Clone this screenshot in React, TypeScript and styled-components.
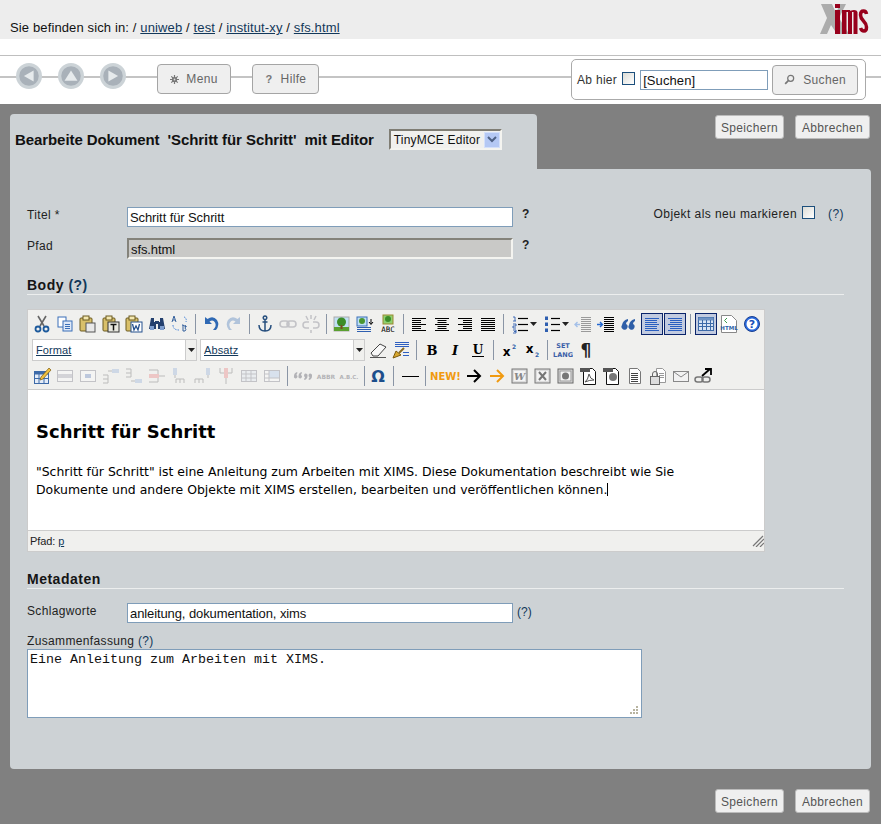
import React from "react"
import styled, { createGlobalStyle } from "styled-components"

const GlobalStyle = createGlobalStyle`
  html, body {
    margin: 0;
    padding: 0;
    background: #808080;
    font-family: "Liberation Sans", Arial, sans-serif;
    font-size: 12px;
    color: #111;
  }
  * { box-sizing: border-box; }
`

const LINK = "#12385a"

const HeaderBar = styled.header`
  height: 39px;
  background: #ededed;
  padding: 21px 12px 0 10px;
  display: flex;
  justify-content: space-between;
  align-items: flex-start;
`

const Crumbs = styled.div`
  font-size: 13px;
  line-height: 14px;
  letter-spacing: 0.13px;
`

const Crumb = styled.a`
  color: ${LINK};
  text-decoration: underline;
`

const LogoSvg = styled.svg`
  margin-top: -17px;
`

const NavWrap = styled.div`
  background: #fff;
  padding-top: 16px;
`

const NavBar = styled.nav`
  height: 49px;
  border-top: 1px solid #bfbfbf;
  background: linear-gradient(#c4c4c4, #c4c4c4) 0 20px / 100% 2px no-repeat;
  display: flex;
  align-items: flex-start;
  padding: 8px 15px 0 16px;
`

const RoundButtons = styled.div`
  display: flex;
  gap: 16px;
  margin-right: 31px;
  margin-top: -1px;
`

const RoundSvg = styled.svg`
  flex: none;
`

const NavButton = styled.button`
  height: 30px;
  width: ${(p) => p.$w}px;
  flex: none;
  margin-right: ${(p) => p.$mr || 0}px;
  border: 1px solid #a5a5a5;
  border-radius: 4px;
  background: #efefef;
  color: #666;
  font: 12px "Liberation Sans", Arial, sans-serif;
  letter-spacing: 0.35px;
  display: flex;
  align-items: center;
  justify-content: center;
  gap: ${(p) => p.$gap || 7}px;
  padding: 0;
`

const NavGlyph = styled.span`
  font-weight: bold;
  font-size: 11px;
  color: #777;
  width: 9px;
  text-align: center;
`

const SearchBox = styled.form`
  margin: -5px 0 0 auto;
  width: 295px;
  height: 41px;
  background: #fff;
  border: 1px solid #aaa;
  border-radius: 5px;
  display: flex;
  align-items: center;
  padding: 0 5px 0 5px;
  color: #333;
  letter-spacing: 0.3px;
  white-space: nowrap;
`

const Check = styled.input.attrs({ type: "checkbox" })`
  appearance: none;
  width: 13px;
  height: 13px;
  margin: ${(p) => p.$m || "0"};
  border: 1px solid #1c4f7c;
  background: linear-gradient(135deg, #dcdcd6, #fff);
  flex: none;
`

const SearchInput = styled.input`
  width: 128px;
  flex: none;
  height: 20px;
  margin: 0 4px 0 5px;
  padding: 1px 2px 0;
  border: 1px solid #7f9db9;
  font: 13px "Liberation Sans", Arial, sans-serif;
  letter-spacing: 0.1px;
  color: #111;
`

const ActionBar = styled.main`
  background: #808080;
  padding: 10px 10px 0 10px;
`

const TabRow = styled.div`
  display: flex;
  justify-content: space-between;
  align-items: flex-start;
`

const Tab = styled.div`
  width: 527px;
  height: 55px;
  background: #cdd2d5;
  border-radius: 4px 4px 0 0;
  padding: 15px 0 0 5px;
  display: flex;
  align-items: flex-start;
  font-size: 15px;
  font-weight: bold;
  white-space: pre;
  color: #111;
`

const TabTitle = styled.span`
  line-height: 21px;
  letter-spacing: -0.08px;
`

const FakeSelect = styled.div`
  margin-left: 15px;
  width: 113px;
  height: 21px;
  border: 2px solid;
  border-color: #7f7d74 #f4f4f0 #f4f4f0 #7f7d74;
  background: #f0f0ee;
  font-size: 12px;
  font-weight: normal;
  letter-spacing: 0.2px;
  display: flex;
  align-items: center;
  justify-content: space-between;
  padding-left: 3px;
`

const SelectArrow = styled.span`
  width: 16px;
  height: 16px;
  background: #b4c8f4;
  border: 1px solid #d4e0fa;
  display: flex;
  align-items: center;
  justify-content: center;
`

const ButtonPair = styled.div`
  display: flex;
  gap: 11px;
  padding: ${(p) => p.$pad};
  justify-content: flex-end;
`

const FormButton = styled.button`
  height: 24px;
  width: ${(p) => p.$w}px;
  background: #efefef;
  border: 1px solid #bbb;
  border-radius: 3px;
  color: #555;
  font: 12px "Liberation Sans", Arial, sans-serif;
  letter-spacing: 0.32px;
  padding: 1px 0 0;
`

const Panel = styled.section`
  width: 861px;
  height: 600px;
  background: #cdd2d5;
  border-radius: 0 4px 4px 4px;
  padding: 38px 27px 0 17px;
`

const FieldRow = styled.div`
  display: flex;
  align-items: flex-start;
  height: ${(p) => p.$h}px;
  margin-top: ${(p) => p.$mt || 0}px;
`

const FieldLabel = styled.label`
  width: 100px;
  line-height: 15px;
  padding-top: 1px;
  letter-spacing: 0.35px;
  color: #222;
`

const TextInput = styled.input`
  width: 386px;
  height: ${(p) => (p.$disabled ? 21 : 20)}px;
  padding: 1px 2px 0;
  border: ${(p) => (p.$disabled ? "2px solid" : "1px solid #7f9db9")};
  border-color: ${(p) => (p.$disabled ? "#84837b #f4f4f0 #f4f4f0 #84837b" : "#7f9db9")};
  background: ${(p) => (p.$disabled ? "#c9c9c7" : "#fff")};
  font: 13px "Liberation Sans", Arial, sans-serif;
  letter-spacing: -0.1px;
  color: #111;
`

const Hint = styled.span`
  font-weight: bold;
  margin-left: 9px;
  line-height: 15px;
  color: #222;
`

const HelpLink = styled.a`
  color: ${LINK};
  margin-left: ${(p) => p.$ml || 0}px;
  padding-top: ${(p) => p.$pt || 0}px;
  font-weight: ${(p) => (p.$bold ? "bold" : "normal")};
`

const NewFlag = styled.div`
  margin-left: auto;
  display: flex;
  align-items: flex-start;
  line-height: 15px;
  letter-spacing: 0.42px;
  color: #222;
`

const SectionTitle = styled.h2`
  margin: 0;
  height: ${(p) => p.$h || 16}px;
  padding-top: ${(p) => p.$pt || 0}px;
  font-size: 14px;
  line-height: 15px;
  font-weight: bold;
  letter-spacing: 0.5px;
  color: #151515;
  border-bottom: 1px solid #eceeee;
`

const Editor = styled.div`
  width: 738px;
  height: 243px;
  margin-top: 14px;
  border: 1px solid #ccc;
  background: #f0f0ee;
  display: flex;
  flex-direction: column;
`

const Toolbars = styled.div`
  height: 80px;
  padding: 1px 0 0 2px;
  border-bottom: 1px solid #ccc;
  flex: none;
`

const ToolRow = styled.div`
  display: flex;
  align-items: center;
  height: ${(p) => p.$h || 25}px;
`

const ToolSlot = styled.span`
  width: ${(p) => p.$w || 23}px;
  height: 22px;
  flex: none;
  display: flex;
  align-items: center;
  justify-content: center;
  opacity: ${(p) => (p.$off ? 0.32 : 1)};
`

const ActiveBox = styled.span`
  width: 22px;
  height: 22px;
  background: #c2cbe0;
  border: 1px solid #0a246a;
  display: flex;
  align-items: center;
  justify-content: center;
`

const ToolSep = styled.span`
  width: ${(p) => p.$w || 8}px;
  flex: none;
  height: 20px;
  display: flex;
  justify-content: center;
  &::before {
    content: "";
    width: 1px;
    height: 100%;
    background: #8a95a5;
  }
`

const ToolSelect = styled.div`
  width: 165px;
  height: 22px;
  margin-left: ${(p) => p.$ml}px;
  margin-right: ${(p) => p.$mr}px;
  background: #fff;
  border: 1px solid #ccc;
  display: flex;
  align-items: center;
  justify-content: space-between;
  font-size: 11px;
  padding-left: 3px;
  flex: none;
`

const ToolSelectText = styled.span`
  color: ${LINK};
  text-decoration: underline;
  letter-spacing: 0.1px;
`

const ToolSelectArrow = styled.span`
  width: 11px;
  height: 20px;
  background: #f0f0ee;
  border-left: 1px solid #ccc;
  display: flex;
  align-items: center;
  justify-content: center;
`

const EditArea = styled.div`
  flex: 1;
  background: #fff;
  padding: 31px 8px 0 8px;
  font-family: "DejaVu Sans", Verdana, sans-serif;
  color: #000;
`

const EditHeading = styled.h1`
  margin: 0 0 20px 0;
  font-size: 18px;
  line-height: 22px;
  font-weight: bold;
`

const EditText = styled.p`
  margin: 0;
  font-size: 12.45px;
  line-height: 18px;
  white-space: pre;
`

const Caret = styled.span`
  display: inline-block;
  width: 1px;
  height: 13px;
  background: #000;
  vertical-align: -2px;
`

const StatusBar = styled.div`
  height: 21px;
  flex: none;
  border-top: 1px solid #ccc;
  padding-left: 2px;
  display: flex;
  align-items: center;
  justify-content: space-between;
  font-size: 11px;
  color: #222;
  letter-spacing: -0.1px;
`

const PathLink = styled.a`
  color: ${LINK};
  text-decoration: underline;
  margin-left: 3px;
`

const AreaLabel = styled.div`
  line-height: 14px;
  margin-top: 9px;
  letter-spacing: 0.35px;
  color: #222;
`

const AreaWrap = styled.div`
  position: relative;
  width: 615px;
  height: 69px;
  margin-top: 1px;
`

const SummaryArea = styled.textarea`
  display: block;
  width: 100%;
  height: 100%;
  resize: none;
  border: 1px solid #7f9db9;
  padding: 2px;
  font: 13.33px/15px "Liberation Mono", "Courier New", monospace;
  color: #111;
  background: #fff;
  outline: none;
`

const Grip = styled.svg`
  position: absolute;
  right: 3px;
  bottom: 3px;
`

const Logo = () => (
  <LogoSvg width="50" height="34" viewBox="0 0 50 34">
    <polygon points="2,0 13,0 17,9 21,0 27,0 20,14 30,30 18,30 12,21 8,30 1,30 8,14" fill="#acacac" />
    <g fill="#98001c">
      <rect x="16" y="0" width="5" height="4" />
      <rect x="16" y="6" width="5" height="24" />
      <rect x="23" y="6" width="4.500" height="24" />
      <rect x="29" y="8" width="4" height="22" />
      <rect x="34.500" y="8" width="4" height="22" />
      <path d="M23 8q2-2 5-2h3l1 2H23zM30 8q2-2 5-2 3 0 3.500 2z" />
    </g>
    <path d="M47.500 10q-.5-3-3-3-3 0-3 4 0 3 3 6t3 6q0 4-2.500 4-2.500 0-3.500-3" fill="none" stroke="#98001c" strokeWidth="3.500" />
  </LogoSvg>
)

const RoundIcon = ({ dir }: { dir: "left" | "up" | "right" }) => {
  const pts = {
    left: "8.500,14 19,8 19,20",
    up: "14,8 21,19 7,19",
    right: "19.500,14 9,8 9,20",
  }[dir]
  return (
    <RoundSvg width="26" height="26" viewBox="0 0 28 28">
      <circle cx="14" cy="14" r="14" fill="#ccd3d7" />
      <circle cx="14" cy="14" r="10.500" fill="#a9b1b9" />
      <polygon points={pts} fill="#e6eaec" />
    </RoundSvg>
  )
}

// small gear of the Menu button
const Gear = () => (
  <svg width="9" height="9" viewBox="0 0 9 9">
    <circle cx="4.500" cy="4.500" r="2.600" fill="#777" />
    <path d="M4.500 0v9M0 4.500h9M1.300 1.300l6.400 6.400M7.700 1.300L1.300 7.700" stroke="#777" strokeWidth="1.200" />
    <circle cx="4.500" cy="4.500" r=".9" fill="#ddd" />
  </svg>
)

// toolbar icons, all on a 20x20 grid
const lines = (x: number, ys: number[], w: number, c = "#000", sw = 1) =>
  ys.map((y) => <path key={y} d={`M${x} ${y + 0.5}h${w}`} stroke={c} strokeWidth={sw} />)

const board = (
  <>
    <rect x="2" y="4" width="12" height="13" rx="1" fill="#d9c06a" stroke="#6b5a20" />
    <rect x="5" y="2" width="6" height="4" fill="#f4e8b0" stroke="#6b5a20" />
  </>
)

const glyphs: Record<string, React.ReactNode> = {
  cut: (
    <>
      <path d="M6 2l6 10M14 2L8 12" stroke="#666" strokeWidth="1.600" />
      <circle cx="6" cy="15" r="2.500" fill="none" stroke="#1d5a9c" strokeWidth="1.800" />
      <circle cx="14" cy="15" r="2.500" fill="none" stroke="#1d5a9c" strokeWidth="1.800" />
    </>
  ),
  copy: (
    <>
      <rect x="3" y="3" width="8" height="10" fill="#fff" stroke="#3b6fb8" />
      <rect x="8" y="7" width="9" height="10" fill="#dfe9f8" stroke="#3b6fb8" />
      {lines(10, [10, 12, 14], 5, "#3b6fb8")}
    </>
  ),
  paste: (
    <>
      {board}
      <rect x="8" y="9" width="9" height="9" fill="#e8e8e8" stroke="#555" />
    </>
  ),
  pasteText: (
    <>
      {board}
      <rect x="7" y="8" width="11" height="10" fill="#e8e8e0" stroke="#333" />
      <path d="M9.500 10.500h6M12.500 10.500v6" stroke="#111" strokeWidth="1.500" />
    </>
  ),
  pasteWord: (
    <>
      {board}
      <rect x="7" y="8" width="11" height="10" fill="#fff" stroke="#24508e" />
      <path d="M8.500 10l1.500 6 2-4 2 4 1.500-6" fill="none" stroke="#24508e" strokeWidth="1.300" />
    </>
  ),
  search: (
    <>
      <path d="M4 4h3v4h1v-1h4v1h1V4h3l2 11h-7V10H9v5H2z" fill="#24406e" />
      <rect x="3" y="12" width="4" height="4" fill="#7f9fd0" />
      <rect x="13" y="12" width="4" height="4" fill="#7f9fd0" />
    </>
  ),
  replace: (
    <>
      <path d="M2 8l2-6 2 6M3 6h2" fill="none" stroke="#34609c" />
      <path d="M14 3q3 1 2 5M3 11q0 5 6 5" fill="none" stroke="#3f7fd8" strokeDasharray="1.500 1" />
      <path d="M12 11h1l3 2v-1M13 11v6h2a2 2 0 0 0 0-3 2 2 0 0 0 0-3" fill="none" stroke="#34609c" />
    </>
  ),
  undo: <path d="M4 3v7h7L8.500 7.500Q12 5 14 8.500T12 16h3Q19 11 16 6 12 1 6.500 5z" fill="#2f69b4" />,
  redo: <path d="M16 3v7H9l2.500-2.500Q8 5 6 8.500T8 16H5Q1 11 4 6 8 1 13.500 5z" fill="#2f69b4" />,
  anchor: (
    <path d="M10 6v11M7.500 8h5M4 11q0 6 6 6 6 0 6-6M10 2a1.800 1.800 0 1 0 .01 0" fill="none" stroke="#274f7e" strokeWidth="1.500" />
  ),
  link: (
    <g fill="none" stroke="#667" strokeWidth="1.600">
      <rect x="2" y="7" width="9" height="6" rx="3" />
      <rect x="9" y="7" width="9" height="6" rx="3" />
    </g>
  ),
  unlink: (
    <g fill="none" stroke="#667" strokeWidth="1.500">
      <path d="M8 8H5a3 3 0 0 0 0 6h3M12 8h3a3 3 0 0 1 0 6h-3" />
      <path d="M10 1v4M5 2l2 4M15 2l-2 4M10 16v3" />
    </g>
  ),
  image: (
    <>
      <rect x="2" y="3" width="15" height="14" fill="#bfe0f4" stroke="#aaa" />
      <rect x="2" y="13" width="15" height="4" fill="#5aa030" />
      <circle cx="9.500" cy="8" r="4.500" fill="#3c8c28" />
      <rect x="8.500" y="11" width="2" height="4" fill="#7a4a20" />
    </>
  ),
  media: (
    <>
      <rect x="2" y="3" width="10" height="9" fill="#bfe0f4" stroke="#3b6fb8" />
      <circle cx="7" cy="7" r="3" fill="#4a9630" />
      {lines(2, [13, 15, 17], 14, "#2f5fb0")}
      <path d="M16 5v5M14 8l2 2.500L18 8" fill="none" stroke="#000" />
    </>
  ),
  spell: (
    <>
      <rect x="5" y="1" width="10" height="9" fill="#8fd070" stroke="#9a8a30" />
      <circle cx="10" cy="5" r="3" fill="#3c8c28" />
      <text x="10" y="18" fontSize="7.500" textAnchor="middle" fontFamily="DejaVu Sans Mono, monospace" fill="#000">ABC</text>
    </>
  ),
  left: <g>{lines(3, [4, 10, 16], 14)}{lines(3, [6, 8, 12, 14], 9)}</g>,
  center: <g>{lines(3, [4, 10, 16], 14)}{lines(5.500, [6, 8, 12, 14], 9)}</g>,
  right: <g>{lines(3, [4, 10, 16], 14)}{lines(8, [6, 8, 12, 14], 9)}</g>,
  justify: <g>{lines(3, [4, 6, 8, 10, 12, 14, 16], 14)}</g>,
  ol: (
    <>
      <path d="M3 3h2v4M3 7h3M3 10h3v2H3v2h3M3 16h3v3H3M4 17.500h2" fill="none" stroke="#2f5fb0" strokeWidth=".9" />
      {lines(8, [4, 10, 16], 10, "#000", 1.200)}
    </>
  ),
  ul: (
    <>
      {[4, 10, 16].map((y) => (
        <rect key={y} x="3" y={y - 1.500} width="3" height="3.500" fill="#2f5fb0" />
      ))}
      {lines(9, [4, 10, 16], 9, "#000", 1.200)}
    </>
  ),
  outdent: (
    <>
      {lines(8, [3, 5, 7, 9, 11, 13, 15, 17], 10, "#9a9a9a")}
      <path d="M2 10.500h5M4.500 8l-2.500 2.500L4.500 13" fill="none" stroke="#a4c0e8" strokeWidth="1.400" />
    </>
  ),
  indent: (
    <>
      {lines(8, [3, 5, 7, 9, 11, 13, 15, 17], 10)}
      <path d="M1 10.500h5M4 8l2.500 2.500L4 13" fill="none" stroke="#2468d0" strokeWidth="1.400" />
    </>
  ),
  quote: <path d="M9 5Q4 6 3 11a3 3 0 1 0 4-1q0-2 2-3zM16 5q-5 1-6 6a3 3 0 1 0 4-1q0-2 2-3z" fill="#2f5fa8" />,
  ltr: <g>{lines(3, [4, 10, 16], 14, "#2a5fc0")}{lines(3, [6, 8, 12, 14], 12, "#2a5fc0")}</g>,
  rtl: <g>{lines(3, [4, 10, 16], 14, "#2a5fc0")}{lines(5, [6, 8, 12, 14], 12, "#2a5fc0")}</g>,
  table: (
    <>
      <rect x="2.500" y="3.500" width="15" height="13" fill="#d8e4f4" stroke="#3d6aa8" />
      <rect x="2.500" y="3.500" width="15" height="3" fill="#6f93c4" />
      <path d="M6.500 6v10M10.500 6v10M14.500 6v10M3 9.500h14M3 12.500h14" stroke="#3d6aa8" />
    </>
  ),
  html: (
    <>
      <path d="M2.500 1.500h10l5 5v12h-15z" fill="#fff" stroke="#888" />
      <path d="M8 4L5.500 6.500 8 9" fill="none" stroke="#3a9a4a" />
      <text x="10" y="16" fontSize="5.500" textAnchor="middle" fontFamily="DejaVu Sans, sans-serif" fontWeight="bold" fill="#2f5fa8">HTML</text>
    </>
  ),
  help: (
    <>
      <circle cx="10" cy="10" r="7.500" fill="#2a6be0" stroke="#1a3f90" />
      <circle cx="10" cy="10" r="5.500" fill="#fff" />
      <text x="10" y="14" fontSize="11" textAnchor="middle" fontFamily="DejaVu Sans, sans-serif" fontWeight="bold" fill="#1a50b8">?</text>
    </>
  ),
  eraser: (
    <>
      <path d="M3 13L12 4l6 3-8 9H5z" fill="#f8f8f8" stroke="#444" />
      <path d="M2 17.500h16" stroke="#555" />
    </>
  ),
  cleanup: (
    <>
      {lines(4, [2, 4, 6], 14, "#2f5fc0")}
      <path d="M13 8l-5 5" stroke="#8a6a20" strokeWidth="2" />
      <path d="M2 18l3-7 5 4z" fill="#d8a830" stroke="#7a5a10" />
      {lines(12, [12, 15], 6, "#2f5fc0")}
    </>
  ),
  bold: <text x="10" y="15" fontSize="13" textAnchor="middle" fontFamily="DejaVu Serif, serif" fontWeight="bold">B</text>,
  italic: <text x="10" y="15" fontSize="13" textAnchor="middle" fontFamily="DejaVu Serif, serif" fontWeight="bold" fontStyle="italic">I</text>,
  underline: (
    <>
      <text x="10" y="14" fontSize="12" textAnchor="middle" fontFamily="DejaVu Serif, serif" fontWeight="bold">U</text>
      <path d="M4 16.500h12" stroke="#000" />
    </>
  ),
  sup: (
    <>
      <text x="7.500" y="16" fontSize="12" textAnchor="middle" fontFamily="DejaVu Sans, sans-serif" fontWeight="bold">x</text>
      <text x="15" y="9" fontSize="6" textAnchor="middle" fontFamily="DejaVu Sans, sans-serif" fontWeight="bold" fill="#2f5fa8">2</text>
    </>
  ),
  sub: (
    <>
      <text x="7.500" y="13" fontSize="12" textAnchor="middle" fontFamily="DejaVu Sans, sans-serif" fontWeight="bold">x</text>
      <text x="15" y="17" fontSize="6" textAnchor="middle" fontFamily="DejaVu Sans, sans-serif" fontWeight="bold" fill="#2f5fa8">2</text>
    </>
  ),
  setLang: (
    <>
      <text x="10" y="8" fontSize="6.500" textAnchor="middle" fontFamily="DejaVu Sans, sans-serif" fontWeight="bold" fill="#3b5fa8">SET</text>
      <text x="10" y="16.500" fontSize="6.500" textAnchor="middle" fontFamily="DejaVu Sans, sans-serif" fontWeight="bold" fill="#3b5fa8">LANG</text>
    </>
  ),
  pilcrow: <text x="10" y="16" fontSize="17" textAnchor="middle" fontFamily="DejaVu Sans, sans-serif" fontWeight="bold" fill="#222">¶</text>,
  tableEdit: (
    <>
      <rect x="2.500" y="5.500" width="14" height="12" fill="#e4ecf8" stroke="#3d6aa8" />
      <rect x="2.500" y="5.500" width="14" height="3" fill="#3d6aa8" />
      <path d="M7 8v9M12 8v9M3 12.500h13" stroke="#3d6aa8" />
      <path d="M9 11l8-9 2 2-8 9-3 1z" fill="#f0c040" stroke="#7a5a10" strokeWidth=".7" />
    </>
  ),
  rowProps: (
    <>
      <rect x="2.500" y="4.500" width="15" height="11" fill="#fff" stroke="#667" />
      <rect x="3" y="8" width="14" height="4" fill="#99a" />
    </>
  ),
  cellProps: (
    <>
      <rect x="2.500" y="4.500" width="15" height="11" fill="#fff" stroke="#667" />
      <rect x="7" y="8" width="6" height="4" fill="#5577bb" />
    </>
  ),
  rowBefore: (
    <>
      <path d="M2 9h5M2 13h5M2 17h5M7 9v8" fill="none" stroke="#555" />
      <rect x="11" y="3" width="7" height="4" fill="#8aa8d8" />
      <path d="M7 5h4" stroke="#555" />
    </>
  ),
  rowAfter: (
    <>
      <path d="M2 3h5M2 7h5M2 11h5M7 3v8" fill="none" stroke="#555" />
      <rect x="11" y="13" width="7" height="4" fill="#8aa8d8" />
      <path d="M7 15h4" stroke="#555" />
    </>
  ),
  rowDel: (
    <>
      <path d="M2 4h9M2 16h9M11 4v12" fill="none" stroke="#555" />
      <rect x="2" y="8" width="10" height="4" fill="#e87070" />
      <path d="M12 10h6" stroke="#555" />
    </>
  ),
  colBefore: (
    <>
      <rect x="3" y="2" width="4" height="7" fill="#8aa8d8" />
      <path d="M5 9v3M6 17v-4h4v4M10 13h4v4" fill="none" stroke="#555" />
    </>
  ),
  colAfter: (
    <>
      <rect x="13" y="2" width="4" height="7" fill="#8aa8d8" />
      <path d="M15 9v3M2 17v-4h4v4M6 13h4v4" fill="none" stroke="#555" />
    </>
  ),
  colDel: (
    <>
      <rect x="8" y="2" width="4" height="10" fill="#e87070" />
      <path d="M4 2v5h4M16 2v5h-4M10 12v6" fill="none" stroke="#555" />
    </>
  ),
  split: (
    <>
      <rect x="2.500" y="4.500" width="15" height="11" fill="#dde6f4" stroke="#667" />
      <path d="M7 5v10M12 5v10M3 8h14M3 12h14" stroke="#667" />
    </>
  ),
  merge: (
    <>
      <rect x="2.500" y="4.500" width="15" height="11" fill="#fff" stroke="#667" />
      <rect x="7" y="5" width="10" height="7" fill="#a8c4ec" />
      <path d="M7 5v10M3 8h4M3 12h14" stroke="#667" />
    </>
  ),
  cite: (
    <g fill="#334">
      <path d="M4 6Q1 7 1 10a1.800 1.800 0 1 0 2.500-1q0-1 1-2zM8.500 6q-3 1-3 4a1.800 1.800 0 1 0 2.500-1q0-1 1-2z" />
      <path d="M11.500 14q3-1 3-4a1.800 1.800 0 1 0-2.500 1q0 1-1 2zM16 14q3-1 3-4a1.800 1.800 0 1 0-2.500 1q0 1-1 2z" />
    </g>
  ),
  abbr: <text x="10" y="13" fontSize="6" textAnchor="middle" fontFamily="DejaVu Sans, sans-serif" fontWeight="bold" fill="#334">ABBR</text>,
  acronym: <text x="10" y="13" fontSize="5.500" textAnchor="middle" fontFamily="DejaVu Sans, sans-serif" fontWeight="bold" fill="#334">A.B.C.</text>,
  omega: <text x="10" y="16" fontSize="16" textAnchor="middle" fontFamily="DejaVu Sans, sans-serif" fontWeight="bold" fill="#1d4f8c">Ω</text>,
  hr: <path d="M2 10.500h17" stroke="#000" />,
  arrowBlack: <path d="M3 10h13M10 4l6 6-6 6" fill="none" stroke="#000" strokeWidth="2" />,
  arrowOrange: <path d="M3 10h13M10 4l6 6-6 6" fill="none" stroke="#f09a10" strokeWidth="2" />,
  word: (
    <>
      <rect x="2" y="3" width="15" height="14" fill="#ddd" stroke="#777" />
      <rect x="4" y="5" width="11" height="10" fill="#f4f4f4" />
      <text x="9.500" y="14" fontSize="10" textAnchor="middle" fontFamily="DejaVu Serif, serif" fontWeight="bold" fontStyle="italic" fill="#888">W</text>
    </>
  ),
  excel: (
    <>
      <rect x="2" y="3" width="15" height="14" fill="#ddd" stroke="#777" />
      <rect x="4" y="5" width="11" height="10" fill="#f4f4f4" />
      <path d="M6 6l7 8M13 6l-7 8" stroke="#777" strokeWidth="2" />
    </>
  ),
  ppt: (
    <>
      <rect x="2" y="3" width="15" height="14" fill="#ddd" stroke="#666" />
      <rect x="4" y="5" width="11" height="10" fill="#f4f4f4" stroke="#999" />
      <circle cx="9.500" cy="10" r="3.500" fill="#777" />
    </>
  ),
  pdf: (
    <>
      <path d="M4.500 2.500h9l3 3v13h-12z" fill="#fff" stroke="#111" />
      <rect x="1" y="2" width="10" height="4" fill="#555" />
      <path d="M6 16q3-2 4-8 1 5 5 6-5 0-9 2z" fill="none" stroke="#555" />
    </>
  ),
  pdf2: (
    <>
      <path d="M4.500 2.500h9l3 3v13h-12z" fill="#fff" stroke="#111" />
      <rect x="1" y="2" width="10" height="4" fill="#555" />
      <circle cx="11" cy="11" r="4" fill="#777" />
    </>
  ),
  doc: (
    <>
      <path d="M4.500 2.500h8l3 3v12h-11z" fill="#fff" stroke="#777" />
      {lines(6, [7, 9, 11, 13, 15], 7, "#444")}
    </>
  ),
  lock: (
    <>
      <path d="M8.500 2.500h6l3 3v11h-9z" fill="#fff" stroke="#999" />
      {lines(11, [7, 9, 11], 5, "#999")}
      <rect x="2.500" y="10.500" width="9" height="8" fill="#ddd" stroke="#666" />
      <path d="M4.500 10V8a2.500 2.500 0 0 1 5 0v2" fill="none" stroke="#666" />
    </>
  ),
  mail: (
    <>
      <rect x="2.500" y="5.500" width="15" height="10" fill="#f2f2f2" stroke="#888" />
      <path d="M3 6l7 5 7-5" fill="none" stroke="#888" />
    </>
  ),
  extLink: (
    <>
      <g fill="none" stroke="#777" strokeWidth="1.500">
        <rect x="1" y="11" width="8" height="5" rx="2.500" />
        <rect x="8" y="11" width="8" height="5" rx="2.500" />
      </g>
      <path d="M8 10l8-7M11 3h6v6" fill="none" stroke="#000" strokeWidth="1.800" />
    </>
  ),
  newFlag: (
    <text x="16.500" y="14" fontSize="10" textAnchor="middle" fontFamily="DejaVu Sans, sans-serif" fontWeight="bold" fill="#f09a10">NEW!</text>
  ),
}

const Glyph = ({ name, w = 20 }: { name: string; w?: number }) => (
  <svg width={w} height="20" viewBox={`0 0 ${w} 20`}>
    {glyphs[name]}
  </svg>
)

const MiniArrow = () => (
  <svg width="7" height="4" viewBox="0 0 7 4">
    <path d="M0 0h7L3.500 4z" fill="#222" />
  </svg>
)

const Tool = ({ name, off, w }: { name: string; off?: boolean; w?: number }) => (
  <ToolSlot $off={off} $w={w}>
    <Glyph name={name} />
  </ToolSlot>
)

const Active = ({ name }: { name: string }) => (
  <ToolSlot>
    <ActiveBox>
      <Glyph name={name} />
    </ActiveBox>
  </ToolSlot>
)

const Split = ({ name }: { name: string }) => (
  <ToolSlot $w={32}>
    <Glyph name={name} />
    <MiniArrow />
  </ToolSlot>
)

const App = () => (
  <>
    <GlobalStyle />
    <HeaderBar>
      <Crumbs>
        Sie befinden sich in: / <Crumb>uniweb</Crumb> / <Crumb>test</Crumb> / <Crumb>institut-xy</Crumb> /{" "}
        <Crumb>sfs.html</Crumb>
      </Crumbs>
      <Logo />
    </HeaderBar>
    <NavWrap>
      <NavBar>
        <RoundButtons>
          <RoundIcon dir="left" />
          <RoundIcon dir="up" />
          <RoundIcon dir="right" />
        </RoundButtons>
        <NavButton $w={74} $mr={21}>
          <Gear />
          Menu
        </NavButton>
        <NavButton $w={67}>
          <NavGlyph>?</NavGlyph>
          Hilfe
        </NavButton>
        <SearchBox>
          Ab hier
          <Check $m="0 0 2px 5px" />
          <SearchInput defaultValue="[Suchen]" />
          <NavButton $w={86} $gap={8}>
            <svg width="11" height="11" viewBox="0 0 14 14">
              <circle cx="8.500" cy="5.500" r="3.800" fill="none" stroke="#777" strokeWidth="1.600" />
              <path d="M5.500 8.500L1.500 12.500" stroke="#777" strokeWidth="2.200" />
            </svg>
            Suchen
          </NavButton>
        </SearchBox>
      </NavBar>
    </NavWrap>
    <ActionBar>
      <TabRow>
        <Tab>
          <TabTitle>{"Bearbeite Dokument  'Schritt für Schritt'  mit Editor"}</TabTitle>
          <FakeSelect>
            TinyMCE Editor
            <SelectArrow>
              <svg width="10" height="7" viewBox="0 0 10 7">
                <path d="M1 1l4 4 4-4" fill="none" stroke="#4d6185" strokeWidth="2" />
              </svg>
            </SelectArrow>
          </FakeSelect>
        </Tab>
        <ButtonPair $pad="1px 1px 0 0">
          <FormButton $w={69}>Speichern</FormButton>
          <FormButton $w={75}>Abbrechen</FormButton>
        </ButtonPair>
      </TabRow>
      <Panel>
        <FieldRow $h={31}>
          <FieldLabel>Titel *</FieldLabel>
          <TextInput defaultValue="Schritt für Schritt" />
          <Hint>?</Hint>
          <NewFlag>
            Objekt als neu markieren
            <Check $m="-1px 0 0 5px" />
            <HelpLink $ml={13}>(?)</HelpLink>
          </NewFlag>
        </FieldRow>
        <FieldRow $h={39}>
          <FieldLabel>Pfad</FieldLabel>
          <TextInput $disabled readOnly defaultValue="sfs.html" />
          <Hint>?</Hint>
        </FieldRow>
        <SectionTitle $h={18} $pt={1}>
          Body <HelpLink $bold>(?)</HelpLink>
        </SectionTitle>
        <Editor>
          <Toolbars>
            <ToolRow $h={26}>
              {["cut", "copy", "paste", "pasteText", "pasteWord", "search", "replace"].map((n) => (
                <Tool key={n} name={n} />
              ))}
              <ToolSep />
              <Tool name="undo" />
              <Tool name="redo" off />
              <ToolSep />
              <Tool name="anchor" />
              <Tool name="link" off />
              <Tool name="unlink" off />
              <ToolSep />
              <Tool name="image" />
              <Tool name="media" />
              <Tool name="spell" />
              <ToolSep />
              <Tool name="left" />
              <Tool name="center" />
              <Tool name="right" />
              <Tool name="justify" />
              <ToolSep />
              <Split name="ol" />
              <Split name="ul" />
              <Tool name="outdent" />
              <Tool name="indent" />
              <Tool name="quote" />
              <Active name="ltr" />
              <Active name="rtl" />
              <ToolSep />
              <Active name="table" />
              <Tool name="html" />
              <Tool name="help" />
            </ToolRow>
            <ToolRow $h={26}>
              <ToolSelect $ml={2} $mr={3}>
                <ToolSelectText>Format</ToolSelectText>
                <ToolSelectArrow>
                  <MiniArrow />
                </ToolSelectArrow>
              </ToolSelect>
              <ToolSelect $ml={0} $mr={1}>
                <ToolSelectText>Absatz</ToolSelectText>
                <ToolSelectArrow>
                  <MiniArrow />
                </ToolSelectArrow>
              </ToolSelect>
              <Tool name="eraser" />
              <Tool name="cleanup" />
              <ToolSep />
              <Tool name="bold" />
              <Tool name="italic" />
              <Tool name="underline" />
              <ToolSep />
              <Tool name="sup" />
              <Tool name="sub" />
              <ToolSep />
              <Tool name="setLang" />
              <Tool name="pilcrow" />
            </ToolRow>
            <ToolRow>
              <Tool name="tableEdit" />
              {["rowProps", "cellProps", "rowBefore", "rowAfter", "rowDel", "colBefore", "colAfter", "colDel", "split", "merge"].map((n) => (
                <Tool key={n} name={n} off />
              ))}
              <ToolSep />
              <Tool name="cite" off />
              <Tool name="abbr" off />
              <Tool name="acronym" off />
              <ToolSep />
              <Tool name="omega" w={20} />
              <ToolSep $w={10} />
              <Tool name="hr" />
              <ToolSep />
              <ToolSlot $w={33}>
                <Glyph name="newFlag" w={33} />
              </ToolSlot>
              {["arrowBlack", "arrowOrange", "word", "excel", "ppt", "pdf", "pdf2", "doc", "lock", "mail", "extLink"].map((n) => (
                <Tool key={n} name={n} />
              ))}
            </ToolRow>
          </Toolbars>
          <EditArea>
            <EditHeading>Schritt für Schritt</EditHeading>
            <EditText>
              {'"Schritt für Schritt" ist eine Anleitung zum Arbeiten mit XIMS. Diese Dokumentation beschreibt wie Sie\n'}
              Dokumente und andere Objekte mit XIMS erstellen, bearbeiten und veröffentlichen können.
              <Caret />
            </EditText>
          </EditArea>
          <StatusBar>
            <span>
              Pfad:<PathLink>p</PathLink>
            </span>
            <svg width="12" height="12" viewBox="0 0 12 12">
              <path d="M1 11L11 1M4 12L12 4M8 12l4-4" stroke="#777" strokeWidth="1.200" />
            </svg>
          </StatusBar>
        </Editor>
        <SectionTitle $h={37} $pt={20}>
          Metadaten
        </SectionTitle>
        <FieldRow $h={22} $mt={14}>
          <FieldLabel>Schlagworte</FieldLabel>
          <TextInput defaultValue="anleitung, dokumentation, xims" />
          <HelpLink $ml={4} $pt={2}>(?)</HelpLink>
        </FieldRow>
        <AreaLabel>
          Zusammenfassung <HelpLink>(?)</HelpLink>
        </AreaLabel>
        <AreaWrap>
          <SummaryArea defaultValue="Eine Anleitung zum Arbeiten mit XIMS." />
          <Grip width="10" height="10" viewBox="0 0 10 10">
            <path d="M7 1h2v2H7zM4 4h2v2H4zM7 4h2v2H7zM1 7h2v2H1zM4 7h2v2H4zM7 7h2v2H7z" fill="#b8b4a0" />
          </Grip>
        </AreaWrap>
      </Panel>
      <ButtonPair $pad="20px 1px 11px 0">
        <FormButton $w={69}>Speichern</FormButton>
        <FormButton $w={75}>Abbrechen</FormButton>
      </ButtonPair>
    </ActionBar>
  </>
)

export default App
